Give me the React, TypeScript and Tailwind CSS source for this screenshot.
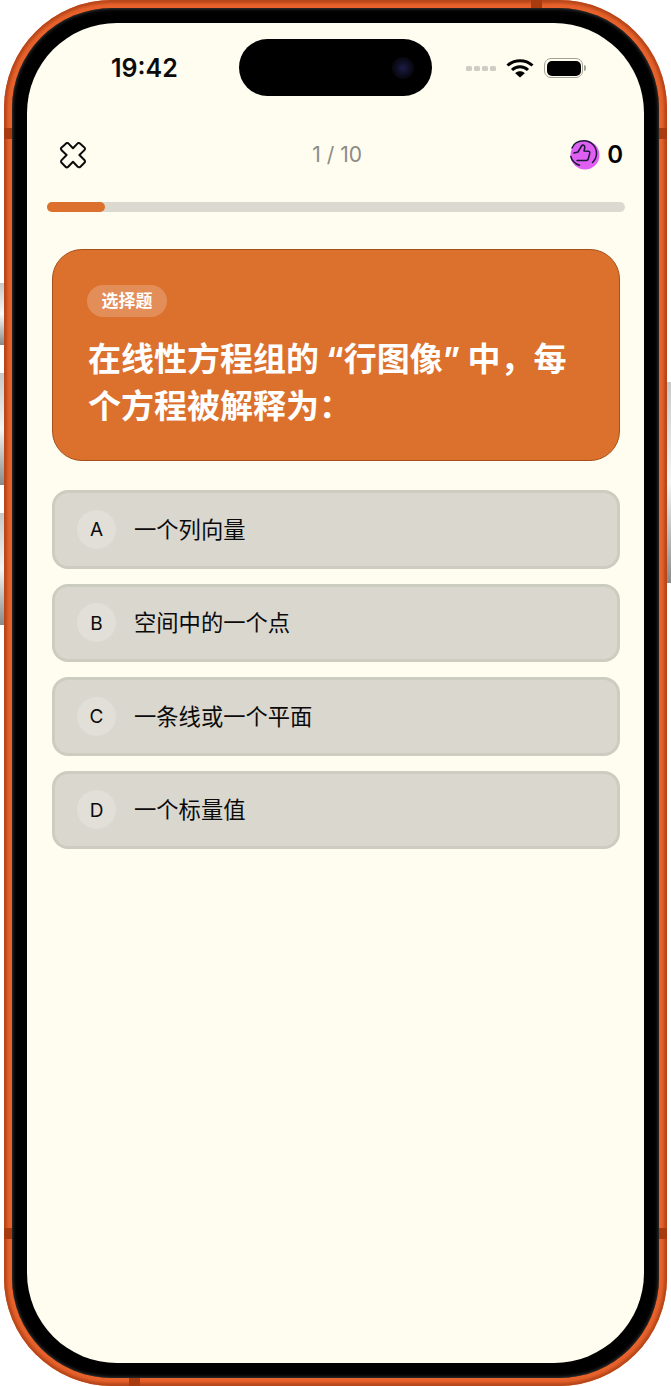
const options = [
  { key: "A", text: "一个列向量" },
  { key: "B", text: "空间中的一个点" },
  { key: "C", text: "一条线或一个平面" },
  { key: "D", text: "一个标量值" },
];

function CloseIcon() {
  return (
    <svg width="28" height="27" viewBox="0 0 28 27" fill="none">
      <path
        d="M5.2 3.2 L7 1.6 C7.8 .9 8.9 .9 9.6 1.6 L14 6.2 L18.4 1.6 C19.1 .9 20.2 .9 21 1.6 L25.4 5.4 C26.2 6.2 26.2 7.4 25.4 8.1 L20.4 13 L25.4 18 C26.2 18.8 26.2 20 25.4 20.7 L21.4 24.7 C20.6 25.5 19.4 25.5 18.7 24.7 L14 19.8 L9.2 24.7 C8.4 25.5 7.3 25.5 6.5 24.7 L2.6 20.8 C1.8 20 1.8 18.9 2.6 18.1 L7.6 13 L2.6 8.2 C1.8 7.4 1.8 6.3 2.6 5.5 Z"
        stroke="#0c0c0c"
        strokeWidth="2"
        strokeLinejoin="round"
      />
    </svg>
  );
}

function ThumbIcon() {
  return (
    <svg width="36" height="34" viewBox="568 140 36 34" fill="none">
      <circle cx="586" cy="157" r="14.5" fill="#df5ff2" />
      <g stroke="#1c1a3a" strokeWidth="1.5" strokeLinecap="round" strokeLinejoin="round">
        <path d="M573 150 C575 145 580 142.8 585 142.8 C592 142.8 597.5 148.5 597.5 155.5 C597.5 159 596 162 593.5 164.5" />
        <path d="M571.8 158.5 C572.5 162 576 166 580.5 167.3" />
        <path d="M575 155 L579 154 L582.5 148 C583.5 146.5 586 147 585.8 149.5 L585 153 L589.5 153.2 C590.8 153.4 591 154.5 590.7 155.5 L589.2 161 C589 162 588.3 162.4 587.5 162.4 L578 162.4" />
      </g>
    </svg>
  );
}

function StatusIcons() {
  return (
    <div className="flex items-center">
      <div className="flex gap-[2px]">
        {[0, 1, 2, 3].map((i) => (
          <span key={i} className="h-[5px] w-[6px] rounded-[1.5px] bg-[#cfcdc6]" />
        ))}
      </div>
      <svg className="ml-[10px]" width="28" height="20" viewBox="0 0 28 20" fill="none">
        <path d="M1.5 7.5 C8.5 1 19.5 1 26.5 7.5" stroke="#000" strokeWidth="3" />
        <path d="M6 12 C10.5 7.6 17.5 7.6 22 12" stroke="#000" strokeWidth="3" />
        <path d="M14 19.5 L9.2 15.2 C12 12.6 16 12.6 18.8 15.2 Z" fill="#000" />
      </svg>
      <div className="ml-[10px] flex items-center">
        <div className="h-[20px] w-[39px] rounded-[7px] border-[1.5px] border-[#a3a297] p-[1.5px]">
          <div className="h-full w-full rounded-[5px] bg-black" />
        </div>
        <div className="ml-[1px] h-[6px] w-[2px] rounded-r-sm bg-[#a3a297]" />
      </div>
    </div>
  );
}

export default function App() {
  return (
    <div className="relative h-[1386px] w-[671px] overflow-hidden bg-white">
      <div className="absolute left-0 top-[283px] h-[62px] w-[4px] bg-gradient-to-b from-[#c8c8c8] via-[#fafafa] to-[#8a8a8a]" />
      <div className="absolute left-0 top-[373px] h-[112px] w-[4px] bg-gradient-to-b from-[#c8c8c8] via-[#f5f5f5] to-[#8a8a8a]" />
      <div className="absolute left-0 top-[513px] h-[112px] w-[4px] bg-gradient-to-b from-[#c8c8c8] via-[#f5f5f5] to-[#8a8a8a]" />
      <div className="absolute right-0 top-[382px] h-[201px] w-[4px] bg-gradient-to-b from-[#c8c8c8] via-[#f5f5f5] to-[#8a8a8a]" />

      <div className="relative mx-auto h-[1386px] w-[663px] rounded-[108px] bg-[#e8622c] p-[8px] shadow-[inset_0_0_3px_3px_#b5461a]">
        <div className="absolute left-0 top-[128px] h-[11px] w-[8px] bg-[#a83c10]" />
        <div className="absolute right-0 top-[128px] h-[11px] w-[8px] bg-[#a83c10]" />
        <div className="absolute left-0 top-[1228px] h-[11px] w-[8px] bg-[#a83c10]" />
        <div className="absolute right-0 top-[1228px] h-[11px] w-[8px] bg-[#a83c10]" />
        <div className="absolute bottom-0 left-[125px] h-[8px] w-[11px] bg-[#a83c10]" />
        <div className="absolute right-[125px] top-0 h-[8px] w-[11px] bg-[#a83c10]" />

        <div className="h-full rounded-[100px] bg-black p-[15px] shadow-[inset_0_0_4px_#555]">
          <div
            lang="zh-CN"
            className="relative h-full overflow-hidden rounded-[90px] bg-[#fffdf0] font-['Noto_Sans_CJK_SC',sans-serif]"
          >
            <div className="absolute left-[212px] top-[16px] flex h-[57px] w-[193px] items-center justify-end rounded-full bg-black pr-[18px]">
              <div className="h-[22px] w-[22px] rounded-full bg-[radial-gradient(circle,#1c1c48_0%,#0c0c1c_50%,#000_100%)]" />
            </div>

            <div className="flex h-[90px] items-center justify-between pl-[84px] pr-[58px]">
              <span className="font-['Inter',sans-serif] text-[25px] font-semibold leading-none text-[#0b0b0b]">19:42</span>
              <StatusIcons />
            </div>

            <div className="mt-[17px] flex h-[50px] items-center justify-between pl-[32px] pr-[21px]">
              <CloseIcon />
              <span className="ml-[20px] font-['Inter',sans-serif] text-[21px] text-[#8b8b86]">1 / 10</span>
              <div className="flex items-center gap-[4px]">
                <ThumbIcon />
                <span className="font-['Inter',sans-serif] text-[24px] font-semibold text-black">0</span>
              </div>
            </div>

            <div className="ml-[20px] mr-[19px] mt-[22px] h-[10px] rounded-full bg-[#dcd9d0]">
              <div className="h-full w-[10%] rounded-full bg-[#dc702d]" />
            </div>

            <div className="ml-[25px] mr-[24px] mt-[37px] h-[212px] rounded-[30px] border border-[#a5501b] bg-[#dc702d] pl-[34px] pr-[40px] pt-[35px]">
              <div className="flex h-[32px] w-[80px] items-center justify-center rounded-full bg-[#e38d58] pb-[2px] text-[17px] font-semibold text-white">
                选择题
              </div>
              <h1 className="mt-[18px] pl-[1px] text-[33px] font-bold leading-[45px] text-white">
                在线性方程组的<span className="ml-[7px] font-['Inter',sans-serif]">“</span>行图像<span className="mr-[7px] font-['Inter',sans-serif]">”</span>中，每个方程被解释为：
              </h1>
            </div>

            <div className="ml-[25px] mr-[24px] mt-[29px] flex flex-col gap-[15px]">
              {options.map((o) => (
                <div
                  key={o.key}
                  className="flex h-[78.5px] items-center rounded-[16px] border-[3px] border-[#cdccc1] bg-[#d9d7ce] pl-[22px]"
                >
                  <div className="flex h-[39px] w-[39px] items-center justify-center rounded-full bg-[#e1dfd7] pt-[2px] font-['Inter',sans-serif] text-[19px] text-[#0b0b0b]">
                    {o.key}
                  </div>
                  <span className="ml-[18px] pb-[2px] text-[22.3px] text-[#0b0b0b]">{o.text}</span>
                </div>
              ))}
            </div>
          </div>
        </div>
      </div>
    </div>
  );
}
